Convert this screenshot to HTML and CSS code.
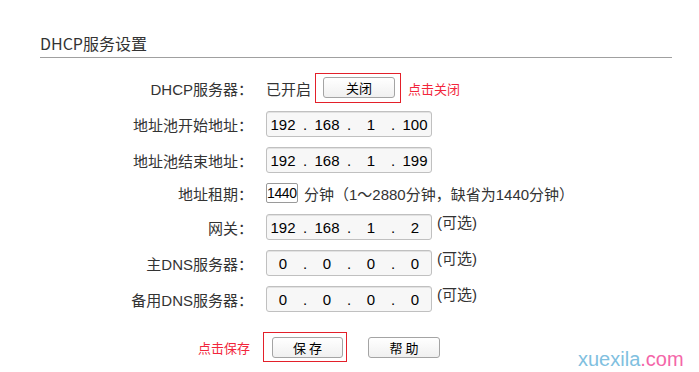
FILE: index.html
```html
<!DOCTYPE html>
<html>
<head>
<meta charset="utf-8">
<title>DHCP服务设置</title>
<link rel="stylesheet" href="styles.css">
</head>
<body>

<div class="panel">
  <h2 class="title">DHCP服务设置</h2>

  <div class="form">
    <div class="row row-server">
      <span class="label">DHCP服务器：</span>
      <span class="value">
        <span class="state">已开启</span>
        <span class="mark mark-close"><button class="btn btn-close">关闭</button></span>
        <span class="hint">点击关闭</span>
      </span>
    </div>

    <div class="row">
      <span class="label">地址池开始地址：</span>
      <span class="value">
        <span class="ip"><span class="seg">192</span><span class="dot">.</span><span class="seg">168</span><span class="dot">.</span><span class="seg">1</span><span class="dot">.</span><span class="seg">100</span></span>
      </span>
    </div>

    <div class="row">
      <span class="label">地址池结束地址：</span>
      <span class="value">
        <span class="ip"><span class="seg">192</span><span class="dot">.</span><span class="seg">168</span><span class="dot">.</span><span class="seg">1</span><span class="dot">.</span><span class="seg">199</span></span>
      </span>
    </div>

    <div class="row row-lease">
      <span class="label">地址租期：</span>
      <span class="value">
        <span class="lease">1440</span>
        <span class="note">分钟（1～2880分钟，缺省为1440分钟）</span>
      </span>
    </div>

    <div class="row row-gw">
      <span class="label">网关：</span>
      <span class="value">
        <span class="ip"><span class="seg">192</span><span class="dot">.</span><span class="seg">168</span><span class="dot">.</span><span class="seg">1</span><span class="dot">.</span><span class="seg">2</span></span>
        <span class="opt">(可选)</span>
      </span>
    </div>

    <div class="row">
      <span class="label">主DNS服务器：</span>
      <span class="value">
        <span class="ip"><span class="seg">0</span><span class="dot">.</span><span class="seg">0</span><span class="dot">.</span><span class="seg">0</span><span class="dot">.</span><span class="seg">0</span></span>
        <span class="opt">(可选)</span>
      </span>
    </div>

    <div class="row">
      <span class="label">备用DNS服务器：</span>
      <span class="value">
        <span class="ip"><span class="seg">0</span><span class="dot">.</span><span class="seg">0</span><span class="dot">.</span><span class="seg">0</span><span class="dot">.</span><span class="seg">0</span></span>
        <span class="opt">(可选)</span>
      </span>
    </div>

    <div class="row row-actions">
      <span class="label"><span class="hint">点击保存</span></span>
      <span class="value">
        <span class="mark mark-save"><button class="btn">保 存</button></span>
        <button class="btn btn-help">帮 助</button>
      </span>
    </div>
  </div>
</div>

<div class="watermark"><span class="wm-name">xuexila</span><span class="wm-dom">.com</span></div>

</body>
</html>
```

FILE: styles.css
```css
body {
  margin: 0;
  background: #fff;
  color: #333;
  font-family: "Liberation Sans", "Noto Sans CJK SC", sans-serif;
  font-size: 15px;
}

.panel {
  margin-left: 40px;
  width: 632px;
  padding-top: 33px;
}

.title {
  margin: 0;
  font-family: "Noto Sans CJK SC", sans-serif;
  font-size: 16px;
  font-weight: normal;
  line-height: 20px;
  color: #333;
  padding-bottom: 4px;
  border-bottom: 1px solid #a0a0a0;
}

.form {
  padding-top: 15px;
}

.row {
  display: flex;
  align-items: center;
  height: 26px;
  margin-top: 10px;
}
.row-server {
  height: 30px;
  margin-top: 0;
  margin-bottom: -2px;
}
.row-lease {
  height: 20px;
}
.row-gw {
  margin-top: 11px;
}
.row-actions {
  height: 30px;
  margin-top: 20px;
}

.label {
  width: 213px;
  text-align: right;
  white-space: nowrap;
}
.value {
  display: flex;
  align-items: center;
  height: 100%;
  margin-left: 13px;
  white-space: nowrap;
}

.state {
  width: 49px;
}

.mark {
  display: inline-flex;
  border: 1px solid #e3202a;
}
.mark-close {
  padding: 3px 5px 4px 7px;
}
.mark-save {
  margin-left: -3px;
  padding: 4px 3px 3px 8px;
}

.btn {
  height: 21px;
  width: 71px;
  padding: 0;
  border: 1px solid #a4a4a4;
  border-radius: 3px;
  background: linear-gradient(#ffffff, #f0f0f0);
  color: #000;
  font-family: "Noto Sans CJK SC", sans-serif;
  font-size: 13px;
  line-height: 19px;
}
.btn-close {
  width: 72px;
}
.btn-help {
  width: 72px;
  margin-left: 21px;
}

.hint {
  color: #f2263c;
  font-size: 13px;
  margin-left: 7px;
}
.label .hint {
  margin-left: 0;
  padding-right: 3px;
}

.ip {
  display: flex;
  align-items: center;
  width: 162px;
  height: 24px;
  padding: 0 1px;
  border: 1px solid #c0c0c0;
  border-radius: 3px;
  background: #f7f7f7;
  box-shadow: inset 0 1px 0 #e2e2e2;
  color: #000;
  font-size: 15px;
}
.seg {
  width: 30px;
  text-align: center;
}
.dot {
  width: 14px;
  text-align: center;
}

.lease {
  width: 30px;
  height: 18px;
  line-height: 18px;
  border: 1px solid #9a9a9a;
  border-radius: 2px;
  color: #000;
  font-size: 14px;
  letter-spacing: -0.4px;
  overflow: hidden;
}
.note {
  margin-left: 6px;
}

.opt {
  align-self: flex-start;
  margin-left: 5px;
  line-height: 18px;
}

.watermark {
  position: absolute;
  left: 578px;
  top: 348px;
  font-family: "Liberation Sans", sans-serif;
  font-size: 20px;
  line-height: 22px;
}
.wm-name {
  color: #80c0e0;
}
.wm-dom {
  color: #f466a8;
}
```
